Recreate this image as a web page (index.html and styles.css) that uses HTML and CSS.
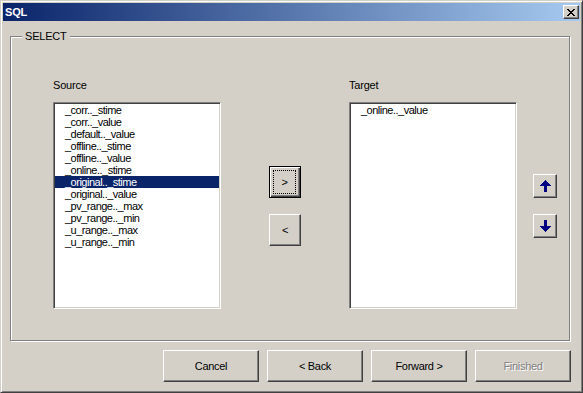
FILE: index.html
```html
<!DOCTYPE html>
<html>
<head>
<meta charset="utf-8">
<link rel="stylesheet" href="styles.css">
</head>
<body>
<div class="window">
  <div class="titlebar">
    <span class="title">SQL</span>
    <button class="close" type="button" aria-label="Close">
      <svg width="8" height="7" viewBox="0 0 8 7" shape-rendering="crispEdges">
        <path d="M0 0h2v1h-2zM6 0h2v1h-2zM1 1h2v1h-2zM5 1h2v1h-2zM2 2h4v1h-4zM3 3h2v1h-2zM2 4h4v1h-4zM1 5h2v1h-2zM5 5h2v1h-2zM0 6h2v1h-2zM6 6h2v1h-2z" fill="#000"/>
      </svg>
    </button>
  </div>
  <div class="content">
    <div class="groupbox">
      <span class="legend">SELECT</span>
      <div class="list-col">
        <div class="label">Source</div>
        <div class="listbox">
          <div class="item">_corr.._stime</div>
          <div class="item">_corr.._value</div>
          <div class="item">_default.._value</div>
          <div class="item">_offline.._stime</div>
          <div class="item">_offline.._value</div>
          <div class="item">_online.._stime</div>
          <div class="item selected">_original.._stime</div>
          <div class="item">_original.._value</div>
          <div class="item">_pv_range.._max</div>
          <div class="item">_pv_range.._min</div>
          <div class="item">_u_range.._max</div>
          <div class="item">_u_range.._min</div>
        </div>
      </div>
      <div class="move-col">
        <button class="btn square default" type="button"><span class="focus">&gt;</span></button>
        <button class="btn square" type="button">&lt;</button>
      </div>
      <div class="list-col target">
        <div class="label">Target</div>
        <div class="listbox">
          <div class="item">_online.._value</div>
        </div>
      </div>
      <div class="order-col">
        <button class="btn arrow" type="button" aria-label="Up">
          <svg width="11" height="12" viewBox="0 0 11 12" shape-rendering="crispEdges">
            <path d="M5 0h1v1h1v1h1v1h1v1h1v1h1v1h-4v6h-3v-6h-4v-1h1v-1h1v-1h1v-1h1v-1h1z" fill="#000080"/>
          </svg>
        </button>
        <button class="btn arrow" type="button" aria-label="Down">
          <svg width="11" height="12" viewBox="0 0 11 12" shape-rendering="crispEdges">
            <path d="M4 0h3v6h4v1h-1v1h-1v1h-1v1h-1v1h-1v1h-1v-1h-1v-1h-1v-1h-1v-1h-1v-1h-1v-1h4z" fill="#000080"/>
          </svg>
        </button>
      </div>
    </div>
    <div class="buttons">
      <button class="btn wide" type="button">Cancel</button>
      <button class="btn wide" type="button">&lt; Back</button>
      <button class="btn wide" type="button">Forward &gt;</button>
      <button class="btn wide disabled" type="button">Finished</button>
    </div>
  </div>
</div>
</body>
</html>
```

FILE: styles.css
```css
* {
  box-sizing: border-box;
}

html, body {
  margin: 0;
  padding: 0;
  background: #d4d0c8;
}

body {
  font-family: "Liberation Sans", Arial, sans-serif;
  font-size: 11px;
  color: #000;
}

.window {
  width: 583px;
  height: 393px;
  background: #d4d0c8;
  border-style: solid;
  border-width: 1px;
  border-color: #d4d0c8 #404040 #404040 #d4d0c8;
  box-shadow: inset 1px 1px #fff, inset -1px -1px #808080;
  padding: 2px;
  display: flex;
  flex-direction: column;
}

.titlebar {
  height: 18px;
  background: linear-gradient(to right, #0a246a, #a6caf0);
  display: flex;
  align-items: flex-start;
  justify-content: space-between;
}

.title {
  color: #fff;
  font-weight: bold;
  font-size: 11px;
  line-height: 18px;
  padding-left: 2px;
  letter-spacing: -0.2px;
}

.close {
  width: 16px;
  height: 14px;
  margin: 2px 1px 0 0;
  padding: 0;
  background: #d4d0c8;
  border-style: solid;
  border-width: 1px;
  border-color: #fff #404040 #404040 #fff;
  box-shadow: inset -1px -1px #808080;
  display: flex;
  align-items: center;
  justify-content: center;
}

.close svg {
  display: block;
  margin-left: -1px;
}

.content {
  display: flex;
  flex-direction: column;
  padding: 15px 0 0 7px;
}

.groupbox {
  position: relative;
  width: 560px;
  height: 305px;
  border: 1px solid #808080;
  box-shadow: inset 1px 1px #fff, 1px 1px #fff;
  display: flex;
  align-items: flex-start;
  padding-left: 42px;
}

.legend {
  position: absolute;
  left: 11px;
  top: -7px;
  padding: 0 3px;
  background: #d4d0c8;
  line-height: 13px;
  letter-spacing: -0.2px;
}

.list-col {
  width: 168px;
  padding-top: 42px;
  display: flex;
  flex-direction: column;
}

.list-col.target {
  margin-left: 48px;
}

.label {
  line-height: 13px;
  height: 13px;
  margin-bottom: 10px;
  letter-spacing: -0.2px;
}

.listbox {
  width: 168px;
  height: 207px;
  background: #fff;
  border-style: solid;
  border-width: 1px;
  border-color: #808080 #fff #fff #808080;
  box-shadow: inset 1px 1px #404040, inset -1px -1px #d4d0c8;
  padding: 1px;
}

.item {
  height: 12px;
  line-height: 12px;
  padding-left: 10px;
  white-space: nowrap;
  letter-spacing: -0.5px;
}

.item.selected {
  background: #0a246a;
  color: #fff;
}

.move-col {
  margin-left: 48px;
  padding-top: 129px;
  display: flex;
  flex-direction: column;
  gap: 16px;
}

.order-col {
  margin-left: 16px;
  padding-top: 137px;
  display: flex;
  flex-direction: column;
  gap: 16px;
}

.btn {
  font-family: "Liberation Sans", Arial, sans-serif;
  font-size: 11px;
  color: #000;
  background: #d4d0c8;
  border-style: solid;
  border-width: 1px;
  border-color: #fff #404040 #404040 #fff;
  box-shadow: inset -1px -1px #808080;
  padding: 0;
  margin: 0;
  display: flex;
  align-items: center;
  justify-content: center;
  letter-spacing: -0.3px;
}

.square {
  width: 32px;
  height: 32px;
}

.square.default {
  border-color: #000;
  box-shadow: inset 1px 1px #fff, inset -1px -1px #404040, inset -2px -2px #808080;
  padding: 3px;
}

.focus {
  width: 100%;
  height: 100%;
  border: 1px dotted #000;
  display: flex;
  align-items: center;
  justify-content: center;
  margin: 0 1px 1px 0;
}

.arrow {
  width: 24px;
  height: 24px;
}

.arrow svg {
  display: block;
}

.buttons {
  display: flex;
  justify-content: flex-end;
  gap: 8px;
  margin-top: 9px;
  padding-right: 9px;
}

.wide {
  width: 96px;
  height: 32px;
}

.disabled {
  color: #808080;
  text-shadow: 1px 1px #fff;
}
```
